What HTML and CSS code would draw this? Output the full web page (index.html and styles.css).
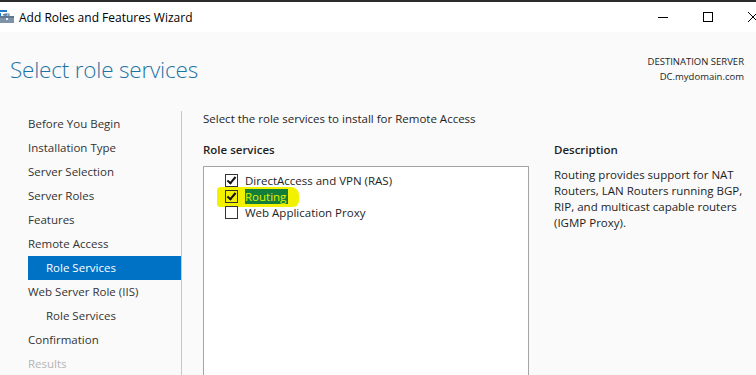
FILE: index.html
```html
<!DOCTYPE html>
<html>
<head>
<meta charset="utf-8">
<link rel="stylesheet" href="styles.css">
</head>
<body>
<div class="window">
  <div class="topline"></div>
  <div class="titlebar">
    <svg class="appicon" width="16" height="16" viewBox="0 0 16 16">
      <rect x="0" y="1" width="8" height="2" fill="#1f7ad0"/>
      <rect x="0" y="4" width="2" height="5" fill="#1f7ad0"/>
      <rect x="4" y="5" width="4" height="1.5" fill="#3b8fd8"/>
      <rect x="1" y="7" width="14" height="7" fill="#7d93a8"/>
      <rect x="1" y="7" width="14" height="2" fill="#5e7790"/>
      <rect x="6" y="5" width="4" height="2" fill="none" stroke="#5e7790" stroke-width="1"/>
      <rect x="7" y="9" width="2" height="2" fill="#e6edf3"/>
    </svg>
    <span class="title">Add Roles and Features Wizard</span>
    <div class="controls">
      <svg class="ctl" width="12" height="12" viewBox="0 0 12 12"><path d="M1 6.5h10" stroke="#000" stroke-width="1"/></svg>
      <svg class="ctl" width="12" height="12" viewBox="0 0 12 12"><rect x="1.5" y="1.5" width="9" height="9" fill="none" stroke="#000" stroke-width="1"/></svg>
      <svg class="ctl close" width="12" height="12" viewBox="0 0 12 12"><path d="M1 1l10 10M11 1L1 11" stroke="#000" stroke-width="1"/></svg>
    </div>
  </div>
  <div class="main">
    <div class="header">
      <h1 class="heading">Select role services</h1>
      <div class="dest">
        <div>DESTINATION SERVER</div>
        <div>DC.mydomain.com</div>
      </div>
    </div>
    <div class="body">
      <nav class="nav">
        <div class="navitem">Before You Begin</div>
        <div class="navitem">Installation Type</div>
        <div class="navitem">Server Selection</div>
        <div class="navitem">Server Roles</div>
        <div class="navitem">Features</div>
        <div class="navitem">Remote Access</div>
        <div class="navitem sub active">Role Services</div>
        <div class="navitem">Web Server Role (IIS)</div>
        <div class="navitem sub">Role Services</div>
        <div class="navitem">Confirmation</div>
        <div class="navitem disabled">Results</div>
      </nav>
      <div class="content">
        <p class="intro">Select the role services to install for Remote Access</p>
        <div class="columns">
          <div class="services">
            <h2 class="label">Role services</h2>
            <div class="listbox">
              <div class="row"><span class="cb checked"></span><span>DirectAccess and VPN (RAS)</span></div>
              <div class="row marked"><span class="marker"></span><span class="cb checked"></span><span class="sel">Routing</span></div>
              <div class="row"><span class="cb"></span><span>Web Application Proxy</span></div>
            </div>
          </div>
          <div class="desc">
            <h2 class="label">Description</h2>
            <p class="desctext">Routing provides support for NAT Routers, LAN Routers running BGP, RIP, and multicast capable routers (IGMP Proxy).</p>
          </div>
        </div>
      </div>
    </div>
  </div>
</div>
</body>
</html>
```

FILE: styles.css
```css
html, body {
  margin: 0;
  padding: 0;
}
body {
  width: 756px;
  height: 375px;
  overflow: hidden;
  font-family: "Open Sans", "Noto Sans", sans-serif;
  font-size: 11.5px;
  color: #1e1e1e;
}
.window {
  display: flex;
  flex-direction: column;
  height: 375px;
}
.topline {
  height: 2px;
  flex: none;
  background: #2b2b2b;
}
.titlebar {
  height: 30px;
  flex: none;
  background: #fff;
  display: flex;
  align-items: center;
}
.appicon {
  margin-left: -1px;
}
.title {
  margin-left: 4px;
  font-size: 12px;
  color: #000;
}
.controls {
  margin-left: auto;
  display: flex;
  gap: 33px;
  margin-right: -3px;
  align-items: center;
}
.ctl {
  display: block;
}
.main {
  flex: 1;
  min-height: 0;
  background: #fafafa;
  display: flex;
  flex-direction: column;
}
.header {
  flex: none;
  display: flex;
  justify-content: space-between;
  align-items: flex-start;
  height: 79px;
}
.heading {
  margin: 23px 0 0 10px;
  font-size: 22.5px;
  font-weight: 300;
  color: #1e73a6;
  line-height: 30px;
  letter-spacing: -0.2px;
}
.dest {
  margin: 22px 12px 0 0;
  text-align: right;
  font-size: 9.5px;
  line-height: 15px;
  color: #1e1e1e;
}
.body {
  flex: 1;
  display: flex;
  min-height: 0;
  overflow: hidden;
}
.nav {
  flex: none;
  width: 153px;
  margin-left: 28px;
  padding-top: 1px;
  border-right: 1px solid #c8c8c8;
  display: flex;
  flex-direction: column;
}
.navitem {
  flex: none;
  height: 24px;
  line-height: 24px;
  color: #333;
  white-space: nowrap;
}
.navitem.sub {
  padding-left: 18px;
}
.navitem.active {
  background: #0072c6;
  color: #fff;
}
.navitem.disabled {
  color: #b4b4b4;
}
.content {
  flex: 1;
  padding-left: 21px;
  display: flex;
  flex-direction: column;
}
.intro {
  margin: 0;
  line-height: 16px;
  color: #1e1e1e;
}
.columns {
  flex: 1;
  display: flex;
  margin-top: 15px;
}
.services {
  width: 326px;
  display: flex;
  flex-direction: column;
}
.label {
  margin: 0;
  font-size: 11.5px;
  font-weight: 600;
  line-height: 16px;
  color: #1e1e1e;
}
.listbox {
  flex: 1;
  margin-top: 8px;
  border: 1px solid #a5a5a5;
  border-bottom: none;
  background: #fff;
  padding: 5px 0 0 21px;
}
.row {
  position: relative;
  display: flex;
  align-items: center;
  height: 16px;
  gap: 7px;
}
.cb {
  width: 11px;
  height: 11px;
  border: 1px solid #333;
  background: #fff;
  position: relative;
  flex: none;
}
.cb.checked::after {
  content: "";
  position: absolute;
  left: 3px;
  top: 0px;
  width: 3px;
  height: 7px;
  border: solid #111;
  border-width: 0 2px 2px 0;
  transform: rotate(40deg);
}
.marker {
  position: absolute;
  left: -8px;
  top: -1px;
  width: 82px;
  height: 20px;
  background: #f2f200;
  border-radius: 4px 8px 6px 3px;
}
.marked .cb {
  background: #f2f200;
}
.sel {
  position: relative;
  background: #137d3a;
  color: #e4ef00;
  padding-right: 2px;
}
.desc {
  margin-left: 25px;
  width: 190px;
}
.desctext {
  margin: 9px 0 0 0;
  line-height: 16px;
  color: #1e1e1e;
}
```
